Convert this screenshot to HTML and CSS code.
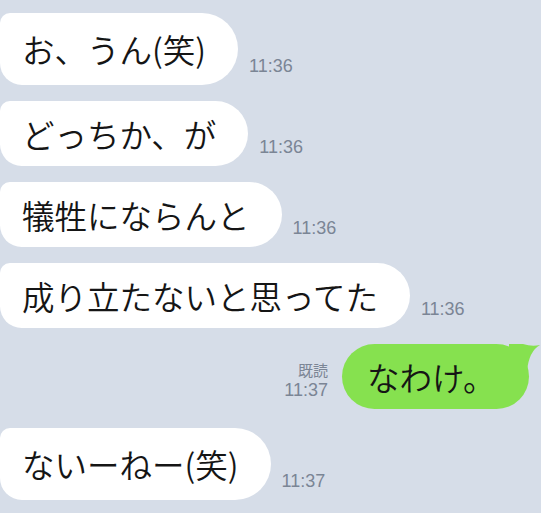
FILE: index.html
```html
<!DOCTYPE html>
<html lang="ja">
<head>
<meta charset="utf-8">
<link rel="stylesheet" href="styles.css">
</head>
<body>
<div class="chat">
  <div class="row row--in">
    <div class="bubble bubble--tall">お、うん(笑)</div>
    <div class="time">11:36</div>
  </div>
  <div class="row row--in">
    <div class="bubble">どっちか、が</div>
    <div class="time">11:36</div>
  </div>
  <div class="row row--in">
    <div class="bubble">犠牲にならんと</div>
    <div class="time">11:36</div>
  </div>
  <div class="row row--in">
    <div class="bubble">成り立たないと思ってた</div>
    <div class="time">11:36</div>
  </div>
  <div class="row row--out">
    <div class="meta">
      <span class="read">既読</span>
      <span class="time time--meta">11:37</span>
    </div>
    <div class="bubble bubble--green">なわけ。<svg class="tail" width="32" height="28" viewBox="0 0 32 28"><path d="M0,0 L14,0 Q23,3 31,1 Q20,7 18,27 L0,27 Z" fill="#86e14f"/></svg></div>
  </div>
  <div class="row row--in row--last">
    <div class="bubble bubble--tall">ないーねー(笑)</div>
    <div class="time">11:37</div>
  </div>
</div>
</body>
</html>
```

FILE: styles.css
```css
html, body {
  margin: 0;
  padding: 0;
}
body {
  background: #d6dde8;
  width: 541px;
  height: 513px;
  overflow: hidden;
  font-family: "Noto Sans CJK JP", "Noto Sans", sans-serif;
}
.chat {
  display: flex;
  flex-direction: column;
  gap: 16px;
  padding-top: 13px;
}
.row {
  display: flex;
  align-items: flex-end;
}
.row--in {
  justify-content: flex-start;
  gap: 11px;
}
.row--out {
  justify-content: flex-end;
  gap: 14px;
  padding-right: 12px;
}
.row--last {
  margin-top: 3px;
}
.bubble {
  position: relative;
  background: #ffffff;
  color: #151515;
  font-size: 32.5px;
  line-height: 65px;
  height: 65px;
  padding: 0 32px 0 22px;
  border-radius: 10px 33px 33px 22px;
  white-space: nowrap;
  font-weight: 350;
}
.bubble--tall {
  line-height: 72px;
  height: 72px;
  border-radius: 10px 36px 36px 22px;
}
.bubble--green {
  background: #86e14f;
  border-radius: 33px;
  padding: 0 31px 0 25px;
  width: 131px;
}
.tail {
  position: absolute;
  top: 0;
  right: -12px;
  display: block;
}
.time {
  font-family: "Liberation Sans", Arial, sans-serif;
  font-size: 18px;
  line-height: 21px;
  color: #7b8595;
  padding-bottom: 8px;
}
.meta {
  display: flex;
  flex-direction: column;
  align-items: flex-end;
  padding-bottom: 8px;
}
.read {
  font-size: 15px;
  line-height: 20px;
  color: #7b8595;
}
.time--meta {
  padding-bottom: 0;
}
```
